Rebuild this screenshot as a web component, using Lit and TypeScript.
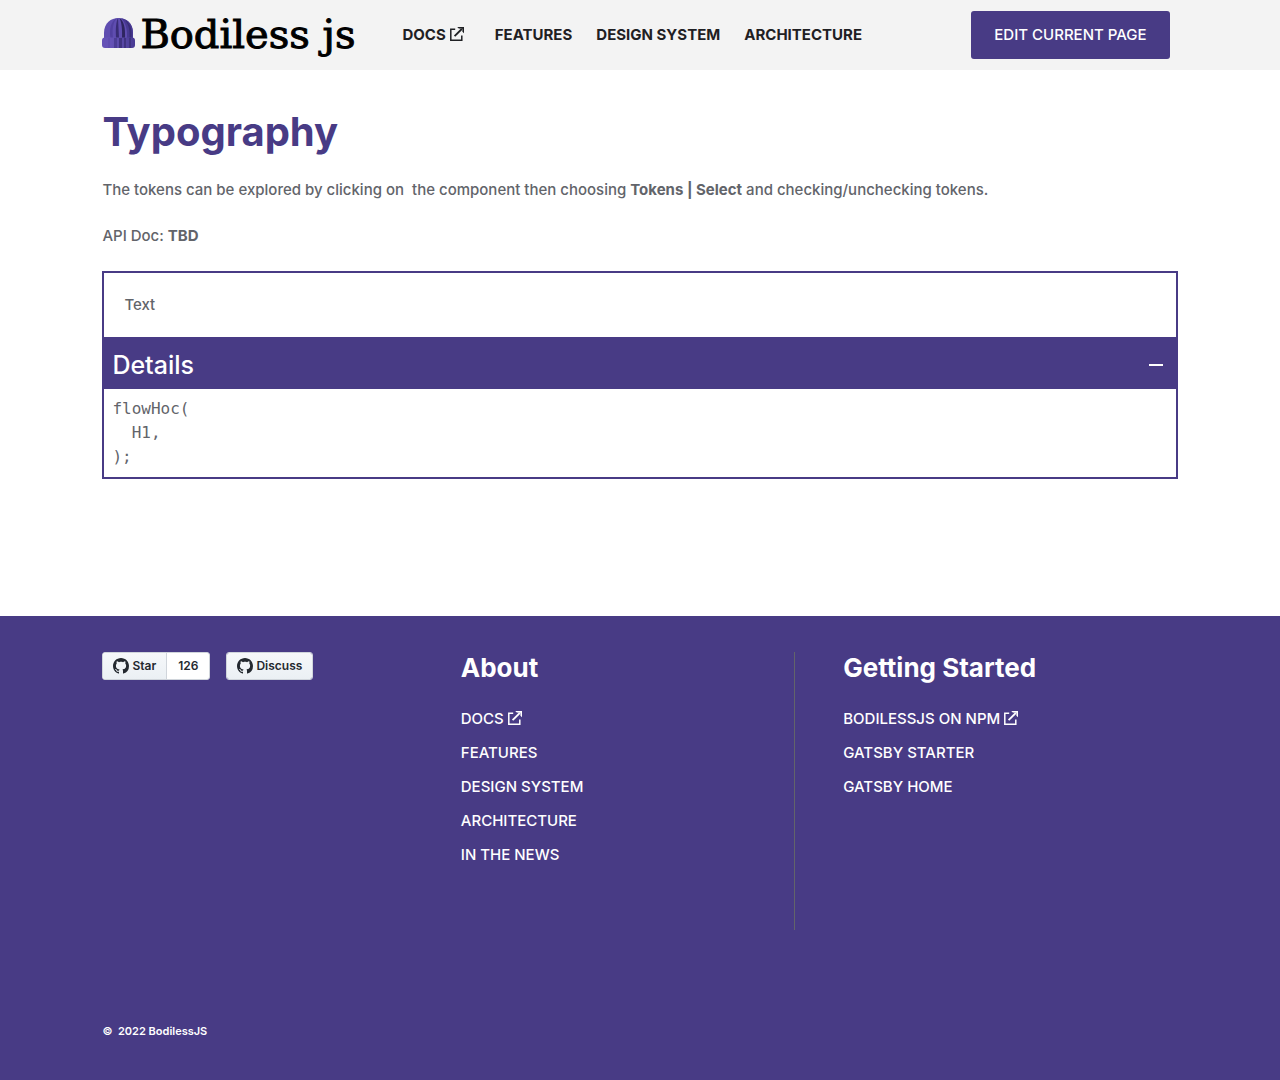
import { LitElement, html, css, svg, nothing } from "lit";
import { customElement, property, state } from "lit/decorators.js";

interface NavLink {
  label: string;
  external?: boolean;
}

const SITE_LINKS: NavLink[] = [
  { label: "DOCS", external: true },
  { label: "FEATURES" },
  { label: "DESIGN SYSTEM" },
  { label: "ARCHITECTURE" },
];

const START_LINKS: NavLink[] = [
  { label: "BODILESSJS ON NPM", external: true },
  { label: "GATSBY STARTER" },
  { label: "GATSBY HOME" },
];

const CODE = `flowHoc(
  H1,
);`;

const externalIcon = html`<svg class="ext" viewBox="0 0 14 14" aria-hidden="true">
  <path d="M5.2 2.2H.8V13.2h11V8.6" fill="none" stroke="currentColor" stroke-width="1.5" />
  <path d="M4.6 9.2 11.8 2" fill="none" stroke="currentColor" stroke-width="1.8" />
  <path d="M7.2 0H14v6.2l-1.600-1.400V1.700L8.800 1.500z" fill="currentColor" />
</svg>`;

const MARK =
  "M8 0C3.58 0 0 3.58 0 8c0 3.54 2.29 6.53 5.47 7.59.4.07.55-.17.55-.38 0-.19-.01-.82-.01-1.49-2.01.37-2.53-.49-2.69-.94-.09-.23-.48-.94-.82-1.13-.28-.15-.68-.52-.01-.53.63-.01 1.08.58 1.23.82.72 1.21 1.87.87 2.33.66.07-.52.28-.87.51-1.07-1.78-.2-3.64-.89-3.64-3.95 0-.87.31-1.59.82-2.15-.08-.2-.36-1.02.08-2.12 0 0 .67-.21 2.2.82.64-.18 1.32-.27 2-.27.68 0 1.36.09 2 .27 1.53-1.04 2.2-.82 2.2-.82.44 1.1.16 1.92.08 2.12.51.56.82 1.27.82 2.15 0 3.07-1.87 3.75-3.65 3.95.29.25.54.73.54 1.48 0 1.07-.01 1.93-.01 2.2 0 .21.15.46.55.38A8.013 8.013 0 0016 8c0-4.42-3.58-8-8-8z";

const brimRibs = [
  [6, 2, "#5f4db0"],
  [12, 3, "#4c3d96"],
  [17, 3, "#3f3280"],
  [22, 2, "#3f3280"],
  [27, 2, "#3f3280"],
] as const;

@customElement("app-root")
export class AppRoot extends LitElement {
  static styles = css`
    :host {
      display: flex;
      flex-direction: column;
      min-height: 100vh;
      font-family: Inter, "Liberation Sans", sans-serif;
      font-size: 15px;
      line-height: 24px;
      color: #62646a;
      background: #fff;
    }
    main {
      flex: 1;
      padding: 37px 8% 0;
      font-weight: 500;
    }
    h1 {
      margin: 0 0 21px;
      font-size: 40px;
      line-height: 50px;
      font-weight: 700;
      color: #483b85;
    }
    p {
      margin: 0 0 22px;
      white-space: pre-wrap;
    }
    b {
      font-weight: 700;
    }
    token-card {
      margin-top: 23px;
    }
  `;

  render() {
    return html`
      <site-header></site-header>
      <main>
        <h1>Typography</h1>
        <p>The tokens can be explored by clicking on  the component then choosing <b>Tokens | Select</b> and checking/unchecking tokens.</p>
        <p>API Doc: <b>TBD</b></p>
        <token-card></token-card>
      </main>
      <site-footer></site-footer>
    `;
  }
}

@customElement("site-header")
export class SiteHeader extends LitElement {
  static styles = css`
    :host {
      display: flex;
      align-items: center;
      padding: 11px 8%;
      background: #f3f3f3;
    }
    a {
      color: inherit;
      text-decoration: none;
    }
    .logo {
      display: flex;
      align-items: center;
      gap: 5px;
      height: 48px;
      margin-right: 47px;
      color: #000;
      font: 40px/46px "DejaVu Serif", serif;
      -webkit-text-stroke: 1px #000;
      white-space: nowrap;
    }
    .name {
      margin-bottom: 2px;
    }
    .hat {
      width: 33px;
      height: 30px;
      margin-bottom: 4px;
    }
    nav {
      display: flex;
      flex: 1;
      gap: 24px;
      font-weight: 700;
      color: #1f2023;
    }
    .ext {
      width: 14px;
      height: 14px;
      margin: 0 7px 0 4px;
      vertical-align: -1px;
    }
    button {
      height: 48px;
      margin-right: 8px;
      padding: 0 23px;
      border: 0;
      border-radius: 3px;
      background: #483b85;
      color: #fff;
      font: inherit;
      font-weight: 500;
    }
  `;

  render() {
    return html`
      <a class="logo" href="#">
        <svg class="hat" viewBox="0 0 33 30" aria-hidden="true">
          <defs>
            <linearGradient id="brim">
              <stop offset="0.300" stop-color="#6552b6" />
              <stop offset="1" stop-color="#483a92" />
            </linearGradient>
          </defs>
          <path d="M2 20V15C2 5 9 0 16.500 0S31 5 31 15v5z" fill="#5f4db0" />
          <path d="M11 20C10 11 11 4 15 0 9 3 7 11 8.500 20z" fill="#5140a0" />
          <path d="M14 20C13.500 10 14 4 16 0L17 20z" fill="#382c74" />
          <path d="M20 20C20.500 11 19.500 4 17.500 0 22 3 23.500 10 23 20z" fill="#2e2560" />
          <path d="M25 20C25.500 12 24 5 19 0 28 2 31 8 31 15v5z" fill="#483a92" />
          <path d="M27.500 20C28 13 27 7 23 2 29 6 30 12 29.500 20z" fill="#392d78" />
          <rect y="19.500" width="33" height="10.500" rx="3" fill="url(#brim)" />
          ${brimRibs.map(([x, w, fill]) => svg`<rect x=${x} y="20" width=${w} height="10" fill=${fill} />`)}
        </svg>
        <span class="name">Bodiless js</span>
      </a>
      <nav>
        ${SITE_LINKS.map((l) => html`<a href="#">${l.label}${l.external ? externalIcon : nothing}</a>`)}
      </nav>
      <button type="button">EDIT CURRENT PAGE</button>
    `;
  }
}

@customElement("token-card")
export class TokenCard extends LitElement {
  static styles = css`
    :host {
      display: block;
      border: 2px solid #483b85;
    }
    .sample {
      padding: 20px;
    }
    .toggle {
      display: flex;
      align-items: center;
      justify-content: space-between;
      width: 100%;
      height: 52px;
      padding: 4px 13px 0 8px;
      border: 0;
      background: #483b85;
      color: #fff;
      font: inherit;
      font-size: 25px;
    }
    .sign {
      width: 14px;
      height: 14px;
    }
    pre {
      margin: 0;
      padding: 8px;
      font: 16px/24px "DejaVu Sans Mono", monospace;
    }
  `;

  @property() text = "Text";
  @state() private open = true;

  render() {
    return html`
      <div class="sample">${this.text}</div>
      <button class="toggle" type="button" aria-expanded=${this.open} @click=${() => (this.open = !this.open)}>
        Details
        <svg class="sign" viewBox="0 0 14 14" aria-hidden="true">
          <path d=${this.open ? "M0 6h14v2H0z" : "M0 6h6V0h2v6h6v2H8v6H6V8H0z"} fill="#fff" />
        </svg>
      </button>
      ${this.open ? html`<pre>${CODE}</pre>` : nothing}
    `;
  }
}

@customElement("site-footer")
export class SiteFooter extends LitElement {
  static styles = css`
    :host {
      display: block;
      padding: 36px 8% 37px;
      background: #483b85;
      color: #fff;
    }
    a {
      color: inherit;
      text-decoration: none;
    }
    .columns {
      display: grid;
      grid-template-columns: repeat(3, 1fr);
      min-height: 278px;
      margin-bottom: 89px;
    }
    .middle {
      margin-right: 24px;
      border-right: 1px solid #62646a;
    }
    .last {
      padding-left: 24px;
    }
    h2 {
      margin: 0 0 23px;
      font-size: 26px;
      line-height: 32px;
      font-weight: 700;
    }
    ul {
      display: grid;
      gap: 10px;
      margin: 0;
      padding: 0;
      list-style: none;
      font-weight: 500;
    }
    .ext {
      width: 14px;
      height: 14px;
      margin-left: 4px;
      vertical-align: -1px;
    }
    .badges {
      display: flex;
      align-items: flex-start;
      gap: 16px;
      font-size: 12px;
      font-weight: 600;
      line-height: 26px;
      color: #24292f;
    }
    .badge {
      display: flex;
      overflow: hidden;
      border: 1px solid #d0d5db;
      border-radius: 3px;
      background: #fff;
    }
    .action {
      display: flex;
      align-items: center;
      gap: 3px;
      padding: 0 10px;
      background: linear-gradient(#f6f8fa, #ebf0f4);
    }
    .count {
      padding: 0 11px;
      border-left: 1px solid #d0d5db;
    }
    .mark {
      width: 16px;
      height: 16px;
    }
    .legal {
      font-size: 11px;
      font-weight: 600;
      white-space: pre;
    }
  `;

  private badge(label: string, count?: string) {
    return html`<div class="badge">
      <a class="action" href="#"
        ><svg class="mark" viewBox="0 0 16 16" aria-hidden="true"><path d=${MARK} fill="currentColor" /></svg>${label}</a
      >
      ${count ? html`<a class="count" href="#">${count}</a>` : nothing}
    </div>`;
  }

  private list(title: string, links: NavLink[]) {
    return html`<h2>${title}</h2>
      <ul>
        ${links.map((l) => html`<li><a href="#">${l.label}${l.external ? externalIcon : nothing}</a></li>`)}
      </ul>`;
  }

  render() {
    return html`
      <div class="columns">
        <div class="badges">${this.badge("Star", "126")}${this.badge("Discuss")}</div>
        <div class="middle">${this.list("About", [...SITE_LINKS, { label: "IN THE NEWS" }])}</div>
        <div class="last">${this.list("Getting Started", START_LINKS)}</div>
      </div>
      <div class="legal">©  2022 BodilessJS</div>
    `;
  }
}
